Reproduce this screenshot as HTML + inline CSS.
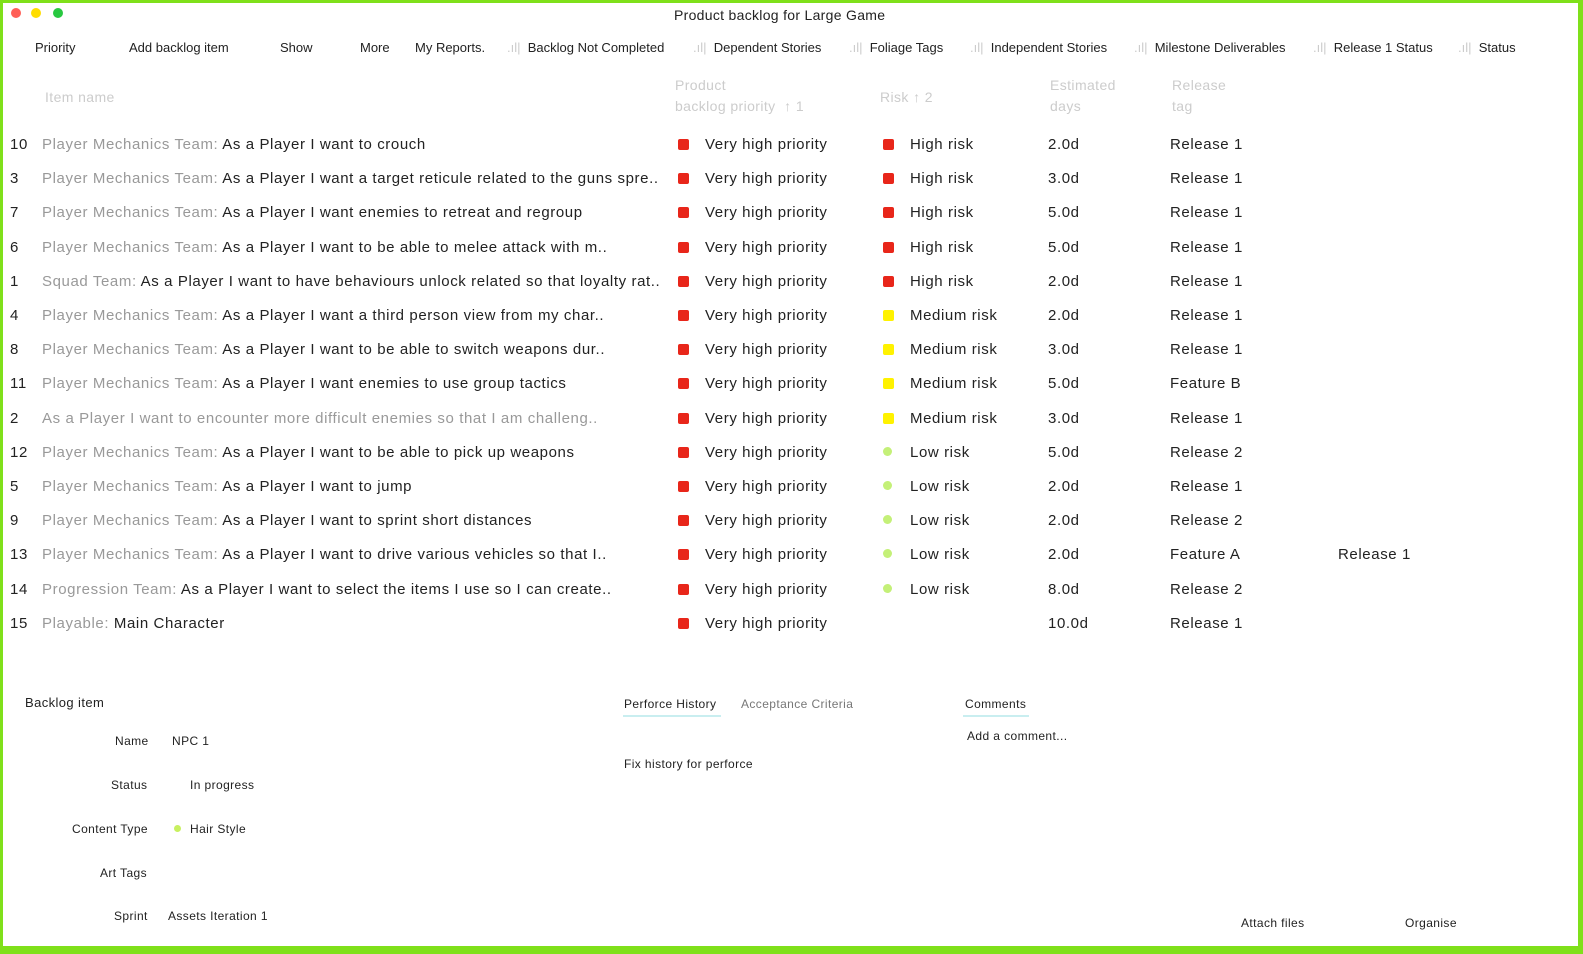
<!DOCTYPE html>
<html><head><meta charset="utf-8"><style>
*{margin:0;padding:0;box-sizing:border-box}
body{width:1583px;height:954px;background:#7fe01a;font-family:"Liberation Sans",sans-serif;overflow:hidden;position:relative}
#w{position:absolute;left:3px;top:3px;width:1575px;height:943px;background:#fff}
.a{position:absolute;white-space:nowrap}
.tb{font-size:13px;color:#222;top:37px}
.r{font-size:15px;color:#222;letter-spacing:0.6px}
.g{color:#999}
.sq{position:absolute;width:11px;height:11px;border-radius:2px}
.h{font-size:14px;color:#ccc;letter-spacing:0.4px}
.s{font-size:12px;color:#222;letter-spacing:0.4px}
.bar{color:#ccc}
</style></head><body><div id="w">
<div class="sq" style="left:8px;top:5px;width:10px;height:10px;border-radius:5px;background:#ff5f57"></div>
<div class="sq" style="left:28px;top:5px;width:10px;height:10px;border-radius:5px;background:#ffdd00"></div>
<div class="sq" style="left:50px;top:5px;width:10px;height:10px;border-radius:5px;background:#28c840"></div>
<div class="a" style="left:671px;top:4px;font-size:14px;color:#222;letter-spacing:0.3px">Product backlog for Large Game</div>
<div class="a tb" style="left:32px">Priority</div>
<div class="a tb" style="left:126px">Add backlog item</div>
<div class="a tb" style="left:277px">Show</div>
<div class="a tb" style="left:357px">More</div>
<div class="a tb" style="left:412px">My Reports.</div>
<div class="a tb" style="left:504px"><span class="bar">.ıl|</span>&nbsp; Backlog Not Completed</div>
<div class="a tb" style="left:690px"><span class="bar">.ıl|</span>&nbsp; Dependent Stories</div>
<div class="a tb" style="left:846px"><span class="bar">.ıl|</span>&nbsp; Foliage Tags</div>
<div class="a tb" style="left:967px"><span class="bar">.ıl|</span>&nbsp; Independent Stories</div>
<div class="a tb" style="left:1131px"><span class="bar">.ıl|</span>&nbsp; Milestone Deliverables</div>
<div class="a tb" style="left:1310px"><span class="bar">.ıl|</span>&nbsp; Release 1 Status</div>
<div class="a tb" style="left:1455px"><span class="bar">.ıl|</span>&nbsp; Status</div>
<div class="a h" style="left:42px;top:86px">Item name</div>
<div class="a h" style="left:672px;top:72px;line-height:21px">Product<br>backlog priority &nbsp;↑ 1</div>
<div class="a h" style="left:877px;top:86px">Risk ↑ 2</div>
<div class="a h" style="left:1047px;top:72px;line-height:21px">Estimated<br>days</div>
<div class="a h" style="left:1169px;top:72px;line-height:21px">Release<br>tag</div>
<div id="rows"></div>
<div class="a s" style="left:22px;top:692px;font-size:13px">Backlog item</div>
<div class="a s" style="left:112px;top:731px">Name</div><div class="a s" style="left:169px;top:731px">NPC 1</div>
<div class="a s" style="left:108px;top:775px">Status</div><div class="a s" style="left:187px;top:775px">In progress</div>
<div class="a s" style="left:69px;top:819px">Content Type</div><div class="sq" style="left:171px;top:822px;width:7px;height:7px;border-radius:4px;background:#c8f060"></div><div class="a s" style="left:187px;top:819px">Hair Style</div>
<div class="a s" style="left:97px;top:863px">Art Tags</div>
<div class="a s" style="left:111px;top:906px">Sprint</div><div class="a s" style="left:165px;top:906px">Assets Iteration 1</div>
<div class="a s" style="left:621px;top:694px">Perforce History</div>
<div style="position:absolute;left:620px;top:712px;width:98px;height:2px;background:#c9eef0"></div>
<div class="a s" style="left:738px;top:694px;color:#777">Acceptance Criteria</div>
<div class="a s" style="left:621px;top:754px">Fix history for perforce</div>
<div class="a s" style="left:962px;top:694px">Comments</div>
<div style="position:absolute;left:960px;top:712px;width:66px;height:2px;background:#c9eef0"></div>
<div class="a s" style="left:964px;top:726px">Add a comment...</div>
<div class="a s" style="left:1238px;top:913px">Attach files</div>
<div class="a s" style="left:1402px;top:913px">Organise</div>
</div>
<script>
const d=[
["10","Player Mechanics Team:","As a Player I want to crouch","r","High risk","2.0d","Release 1",""],
["3","Player Mechanics Team:","As a Player I want a target reticule related to the guns spre..","r","High risk","3.0d","Release 1",""],
["7","Player Mechanics Team:","As a Player I want enemies to retreat and regroup","r","High risk","5.0d","Release 1",""],
["6","Player Mechanics Team:","As a Player I want to be able to melee attack with m..","r","High risk","5.0d","Release 1",""],
["1","Squad Team:","As a Player I want to have behaviours unlock related so that loyalty rat..","r","High risk","2.0d","Release 1",""],
["4","Player Mechanics Team:","As a Player I want a third person view from my char..","y","Medium risk","2.0d","Release 1",""],
["8","Player Mechanics Team:","As a Player I want to be able to switch weapons dur..","y","Medium risk","3.0d","Release 1",""],
["11","Player Mechanics Team:","As a Player I want enemies to use group tactics","y","Medium risk","5.0d","Feature B",""],
["2","As a Player I want to encounter more difficult enemies so that I am challeng..","","y","Medium risk","3.0d","Release 1",""],
["12","Player Mechanics Team:","As a Player I want to be able to pick up weapons","l","Low risk","5.0d","Release 2",""],
["5","Player Mechanics Team:","As a Player I want to jump","l","Low risk","2.0d","Release 1",""],
["9","Player Mechanics Team:","As a Player I want to sprint short distances","l","Low risk","2.0d","Release 2",""],
["13","Player Mechanics Team:","As a Player I want to drive various vehicles so that I..","l","Low risk","2.0d","Feature A","Release 1"],
["14","Progression Team:","As a Player I want to select the items I use so I can create..","l","Low risk","8.0d","Release 2",""],
["15","Playable:","Main Character","","","10.0d","Release 1",""]];
const c={r:"#e8261a",y:"#fff200",l:"#c4f078"};let h="";
d.forEach((x,i)=>{const t=133+i*34.2;
h+=`<div class="a r" style="left:7px;top:${t}px">${x[0]}</div><div class="a r" style="left:39px;top:${t}px;max-width:620px;overflow:hidden"><span class="g">${x[1]}</span> ${x[2]}</div>`;
h+=`<div class="sq" style="left:675px;top:${t+3}px;background:#e8261a"></div><div class="a r" style="left:702px;top:${t}px">Very high priority</div>`;
if(x[3])h+=`<div class="sq" style="left:880px;top:${t+3}px;background:${c[x[3]]}${x[3]=='l'?';width:9px;height:9px;border-radius:5px':''}"></div><div class="a r" style="left:907px;top:${t}px">${x[4]}</div>`;
h+=`<div class="a r" style="left:1045px;top:${t}px">${x[5]}</div><div class="a r" style="left:1167px;top:${t}px">${x[6]}</div>`;
if(x[7])h+=`<div class="a r" style="left:1335px;top:${t}px">${x[7]}</div>`;});
document.getElementById('rows').innerHTML=h;
</script>
</body></html>
